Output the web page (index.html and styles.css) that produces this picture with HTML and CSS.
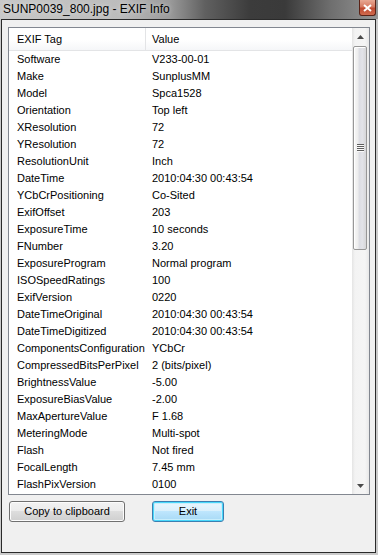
FILE: index.html
```html
<!DOCTYPE html>
<html>
<head>
<meta charset="utf-8">
<link rel="stylesheet" href="styles.css">
</head>
<body>
<div class="window">
  <div class="titlebar">
    <span class="title">SUNP0039_800.jpg - EXIF Info</span>
    <span class="close"><svg width="9" height="8" viewBox="0 0 9 8"><path d="M1 1 L8 7 M8 1 L1 7" stroke="#fff" stroke-width="2"/></svg></span>
  </div>
  <div class="client">
    <div class="list">
      <div class="listmain">
        <div class="header">
          <div class="hcell c1">EXIF Tag</div>
          <div class="hcell c2">Value</div>
        </div>
        <div class="rows">
          <div class="row"><span class="c1">Software</span><span class="c2">V233-00-01</span></div>
          <div class="row"><span class="c1">Make</span><span class="c2">SunplusMM</span></div>
          <div class="row"><span class="c1">Model</span><span class="c2">Spca1528</span></div>
          <div class="row"><span class="c1">Orientation</span><span class="c2">Top left</span></div>
          <div class="row"><span class="c1">XResolution</span><span class="c2">72</span></div>
          <div class="row"><span class="c1">YResolution</span><span class="c2">72</span></div>
          <div class="row"><span class="c1">ResolutionUnit</span><span class="c2">Inch</span></div>
          <div class="row"><span class="c1">DateTime</span><span class="c2">2010:04:30 00:43:54</span></div>
          <div class="row"><span class="c1">YCbCrPositioning</span><span class="c2">Co-Sited</span></div>
          <div class="row"><span class="c1">ExifOffset</span><span class="c2">203</span></div>
          <div class="row"><span class="c1">ExposureTime</span><span class="c2">10 seconds</span></div>
          <div class="row"><span class="c1">FNumber</span><span class="c2">3.20</span></div>
          <div class="row"><span class="c1">ExposureProgram</span><span class="c2">Normal program</span></div>
          <div class="row"><span class="c1">ISOSpeedRatings</span><span class="c2">100</span></div>
          <div class="row"><span class="c1">ExifVersion</span><span class="c2">0220</span></div>
          <div class="row"><span class="c1">DateTimeOriginal</span><span class="c2">2010:04:30 00:43:54</span></div>
          <div class="row"><span class="c1">DateTimeDigitized</span><span class="c2">2010:04:30 00:43:54</span></div>
          <div class="row"><span class="c1">ComponentsConfiguration</span><span class="c2">YCbCr</span></div>
          <div class="row"><span class="c1">CompressedBitsPerPixel</span><span class="c2">2 (bits/pixel)</span></div>
          <div class="row"><span class="c1">BrightnessValue</span><span class="c2">-5.00</span></div>
          <div class="row"><span class="c1">ExposureBiasValue</span><span class="c2">-2.00</span></div>
          <div class="row"><span class="c1">MaxApertureValue</span><span class="c2">F 1.68</span></div>
          <div class="row"><span class="c1">MeteringMode</span><span class="c2">Multi-spot</span></div>
          <div class="row"><span class="c1">Flash</span><span class="c2">Not fired</span></div>
          <div class="row"><span class="c1">FocalLength</span><span class="c2">7.45 mm</span></div>
          <div class="row"><span class="c1">FlashPixVersion</span><span class="c2">0100</span></div>
        </div>
      </div>
      <div class="scrollbar">
        <div class="sbtn"><svg width="7" height="4" viewBox="0 0 7 4"><path d="M0 4 L3.5 0 L7 4 Z" fill="#4a4a4a"/></svg></div>
        <div class="track">
          <div class="thumb"><div class="grip"><i></i><i></i><i></i><i></i></div></div>
        </div>
        <div class="sbtn"><svg width="7" height="4" viewBox="0 0 7 4"><path d="M0 0 L7 0 L3.5 4 Z" fill="#4a4a4a"/></svg></div>
      </div>
    </div>
    <div class="buttons">
      <div class="btn copy">Copy to clipboard</div>
      <div class="btn exit">Exit</div>
    </div>
  </div>
</div>
</body>
</html>
```
FILE: styles.css
```css
* { box-sizing: border-box; }
html, body { margin: 0; padding: 0; }
body {
  width: 378px;
  height: 555px;
  overflow: hidden;
  background: #cbcbcb;
  font-family: "Liberation Sans", Arial, sans-serif;
  color: #000;
}
.window {
  width: 378px;
  height: 555px;
  display: flex;
  flex-direction: column;
}
.titlebar {
  height: 19px;
  flex: none;
  display: flex;
  align-items: flex-start;
  background: linear-gradient(to right, #c8c8c8 0, #bcbcbc 120px, #9a9a9a 170px, #606060 205px, #3c3c3c 250px, #3a3a3a 285px, #6e6e6e 330px, #959595 378px);
}
.title {
  font-size: 12px;
  line-height: 18px;
  padding-left: 3px;
  text-shadow: 0 0 5px rgba(255,255,255,0.6);
}
.close {
  margin-left: auto;
  margin-right: 2px;
  width: 17px;
  height: 16px;
  border: 1px solid #5a2216;
  border-top: none;
  border-radius: 0 0 3px 3px;
  background: linear-gradient(#e8a893 0, #d67a62 45%, #c04a30 55%, #d06a4e 100%);
  display: flex;
  align-items: center;
  justify-content: center;
}
.client {
  flex: 1;
  margin: 0 2px 2px 1px;
  border: 1px solid #2a2a2a;
  background: #f0f0f0;
  padding: 7px 0 0 6px;
}
.list {
  width: 362px;
  height: 468px;
  border: 1px solid #828790;
  background: #fff;
  display: flex;
}
.listmain {
  flex: 1;
  display: flex;
  flex-direction: column;
}
.header {
  height: 23px;
  display: grid;
  grid-template-columns: 137px 1fr;
  border-bottom: 1px solid #e3e4e6;
  background: linear-gradient(#ffffff 0, #ffffff 55%, #f5f6f8 100%);
  font-size: 11px;
  line-height: 22px;
}
.hcell.c1 {
  padding-left: 8px;
  border-right: 1px solid #e3e4e6;
}
.hcell.c2 { padding-left: 6px; }
.row {
  display: grid;
  grid-template-columns: 137px 1fr;
  height: 17px;
  font-size: 11px;
  line-height: 17px;
  white-space: nowrap;
}
.row .c1 { padding-left: 8px; }
.row .c2 { padding-left: 6px; }
.scrollbar {
  width: 17px;
  display: flex;
  flex-direction: column;
  background: linear-gradient(to right, #e4e4e4 0, #f3f3f3 3px, #f5f5f5 13px, #e8e8e8 17px);
}
.sbtn {
  height: 17px;
  flex: none;
  display: flex;
  align-items: center;
  justify-content: center;
}
.track {
  flex: 1;
  padding-top: 1px;
}
.thumb {
  margin-left: 1px;
  width: 14px;
  height: 204px;
  border: 1px solid #979797;
  border-radius: 2px;
  background: linear-gradient(to right, #f8f8f8 0, #eeeeee 30%, #dcdde3 45%, #e2e3e8 70%, #d6d6d8 100%);
  display: flex;
  align-items: center;
  justify-content: center;
  box-shadow: inset 1px 1px 0 #fff;
}
.grip {
  display: flex;
  flex-direction: column;
}
.grip i {
  display: block;
  width: 7px;
  height: 2px;
  border-top: 1px solid #5e5e5e;
  border-bottom: 1px solid #fafafa;
  margin-left: 1px;
}
.buttons {
  display: flex;
  margin-top: 6px;
  padding-left: 1px;
}
.btn {
  height: 21px;
  font-size: 11px;
  line-height: 19px;
  text-align: center;
  border: 1px solid #707070;
  border-radius: 3px;
  background: linear-gradient(#f2f2f2 0, #ebebeb 50%, #dddddd 50%, #cfcfcf 100%);
  box-shadow: inset 0 0 0 1px #fcfcfc;
}
.copy { width: 116px; }
.exit {
  width: 72px;
  margin-left: 27px;
  border-color: #3c7fb1;
  background: linear-gradient(#eaf6fd 0, #d9f0fc 50%, #bee6fd 50%, #a7d9f5 100%);
  box-shadow: inset 0 0 0 1px #48d8fb, inset 0 0 0 2px #c9eefc;
}
```
